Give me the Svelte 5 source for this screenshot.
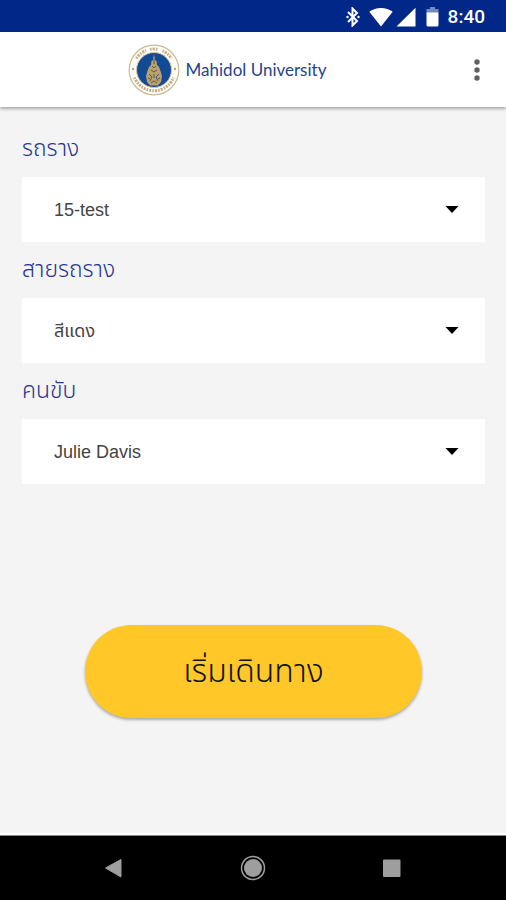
<script>
  let fields = $state([
    { id: "tram", label: "รถราง", value: "15-test", options: ["15-test"] },
    { id: "line", label: "สายรถราง", value: "สีแดง", options: ["สีแดง"] },
    {
      id: "driver",
      label: "คนขับ",
      value: "Julie Davis",
      options: ["Julie Davis"],
    },
  ]);
</script>

<div class="screen">
  <div class="status">
    <svg width="14" height="20" viewBox="0 0 14 20" aria-hidden="true">
      <path
        d="M2 5l9 9-4.500 4.500V1.500L11 6l-9 9"
        fill="none"
        stroke="#fff"
        stroke-width="2"
      />
      <circle cx="1.500" cy="10" r="1.200" fill="#fff" />
      <circle cx="12.500" cy="10" r="1.200" fill="#fff" />
    </svg>
    <svg class="wifi" width="24" height="20" viewBox="0 0 24 20" aria-hidden="true">
      <path d="M12 19.500L.3 4.800C3.500 2.300 7.500 1 12 1s8.500 1.300 11.700 3.800z" fill="#fff" />
    </svg>
    <svg class="signal" width="20" height="20" viewBox="0 0 20 20" aria-hidden="true">
      <path d="M19.500.8v18.700H.5z" fill="#fff" />
    </svg>
    <svg class="battery" width="13" height="20" viewBox="0 0 13 20" aria-hidden="true">
      <path d="M4 0h5v2h3.500v4H.5V2H4z" fill="#7288c2" />
      <path d="M.5 5.500h12V18q0 1.500-1.500 1.500H2Q.5 19.500.5 18z" fill="#fff" />
    </svg>
    <span class="time">8:40</span>
  </div>

  <header>
    <div class="brand">
      <svg width="52" height="52" viewBox="0 0 52 52" aria-hidden="true">
        <circle cx="26" cy="26" r="24.800" fill="#fffdf8" stroke="#cbb896" stroke-width="1.200" />
        <g fill="none" stroke="#c5ae86" stroke-width="3" stroke-dasharray="1.600 1 2.200 1">
          <path d="M8.500 14.500A21 21 0 0 1 18 6.500" />
          <path d="M22 5.400A21 21 0 0 1 30 5.400" />
          <path d="M34.500 6.800A21 21 0 0 1 43.500 14.500" />
          <path d="M6.500 33.500A21 21 0 0 0 45.500 33.500" />
        </g>
        <circle cx="5" cy="25" r="1.200" fill="#bfa16a" />
        <circle cx="47" cy="25" r="1.200" fill="#bfa16a" />
        <circle cx="26" cy="26" r="17.500" fill="#124a93" stroke="#d8c7a5" stroke-width="1" />
        <path
          d="M26 10l1 6 1.500 1 .5 4 2 2 1.500 4 1.500 5-1 6-3 3.500h-8L19 38l-1-6 1.500-5 1.500-4 2-2 .5-4 1.500-1z"
          fill="#bda16a"
        />
        <path
          d="M26 15v5M24 22l2 2 2-2M23 26l3 2 3-2M21 30l3 3-2 4M31 30l-3 3 2 4M26 30v4M23 39l3-2 3 2M20 34l2 1M32 34l-2 1"
          fill="none"
          stroke="#435d78"
          stroke-width="1"
        />
      </svg>
      <span class="name">Mahidol University</span>
    </div>
    <button class="more" aria-label="More options">
      <svg width="6" height="22" viewBox="0 0 6 22" aria-hidden="true">
        <circle cx="3" cy="3" r="2.700" fill="#616161" />
        <circle cx="3" cy="11" r="2.700" fill="#616161" />
        <circle cx="3" cy="19" r="2.700" fill="#616161" />
      </svg>
    </button>
  </header>

  <main>
    {#each fields as field (field.id)}
      <div class="field">
        <label for={field.id}>{field.label}</label>
        <div class="picker">
          <select id={field.id} bind:value={field.value}>
            {#each field.options as option}
              <option value={option}>{option}</option>
            {/each}
          </select>
          <svg class="arrow" width="14" height="7" viewBox="0 0 14 7" aria-hidden="true">
            <path d="M.5 0h13L7 7z" fill="#000" />
          </svg>
        </div>
      </div>
    {/each}

    <button class="start">เริ่มเดินทาง</button>
  </main>

  <nav>
    <button aria-label="Back">
      <svg width="28" height="28" viewBox="0 0 28 28" aria-hidden="true">
        <path d="M5.500 14L21 5.500v17.500z" fill="#9e9e9e" stroke="#9e9e9e" stroke-linejoin="round" />
      </svg>
    </button>
    <button aria-label="Home">
      <svg width="28" height="28" viewBox="0 0 28 28" aria-hidden="true">
        <circle cx="14" cy="14" r="11.500" fill="none" stroke="#9e9e9e" stroke-width="1.500" />
        <circle cx="14" cy="14" r="9" fill="#9e9e9e" />
      </svg>
    </button>
    <button aria-label="Recent apps">
      <svg width="28" height="28" viewBox="0 0 28 28" aria-hidden="true">
        <rect x="5" y="5.500" width="17.500" height="17.500" rx="1" fill="#9e9e9e" />
      </svg>
    </button>
  </nav>
</div>

<style>
  .screen {
    display: flex;
    flex-direction: column;
    min-height: 100vh;
    background: #f4f4f4;
    font-family: "Liberation Sans", "Noto Sans Thai", sans-serif;
  }

  button {
    border: 0;
    padding: 0;
    background: none;
    font: inherit;
    cursor: pointer;
  }

  svg {
    display: block;
    flex: none;
  }

  .status {
    display: flex;
    align-items: center;
    justify-content: flex-end;
    height: 32px;
    padding: 1px 21px 0;
    box-sizing: border-box;
    background: #012888;
    color: #fff;
  }

  .wifi {
    margin-left: 9px;
  }

  .signal {
    margin-left: 3px;
  }

  .battery {
    margin: 0 9px 0 10px;
  }

  .time {
    font-family: Roboto, sans-serif;
    font-size: 19px;
    font-weight: 500;
  }

  header {
    display: grid;
    grid-template-columns: 48px 1fr 48px;
    align-items: center;
    height: 75px;
    padding: 0 5px;
    background: #fff;
    box-shadow: 0 2px 3px rgba(0, 0, 0, 0.3);
  }

  .brand {
    display: flex;
    grid-column: 2;
    align-items: center;
    justify-content: center;
    gap: 6px;
    padding-right: 52px;
  }

  .name {
    color: #26438c;
    font-family: Lato, sans-serif;
    font-size: 17px;
    white-space: nowrap;
  }

  .more {
    display: flex;
    align-items: center;
    justify-content: center;
    height: 48px;
  }

  main {
    display: flex;
    flex: 1;
    flex-direction: column;
    padding: 14px 21px 24px 22px;
  }

  label {
    display: block;
    padding: 13px 0 15px;
    color: #26348f;
    font-size: 23px;
    font-weight: 300;
    line-height: 28px;
  }

  .picker {
    display: grid;
    align-items: center;
    background: #fff;
  }

  select {
    grid-area: 1 / 1;
    width: 100%;
    height: 65px;
    padding: 0 64px 0 32px;
    border: 0;
    appearance: none;
    background: none;
    color: #444;
    font: inherit;
    font-size: 18px;
  }

  .arrow {
    grid-area: 1 / 1;
    justify-self: end;
    margin-right: 26px;
    pointer-events: none;
  }

  .start {
    align-self: center;
    width: 73%;
    height: 93px;
    margin-top: 141px;
    border-radius: 47px;
    background: #ffc727;
    box-shadow: 0 2px 3px rgba(0, 0, 0, 0.3);
    color: #111;
    font-size: 32px;
    font-weight: 300;
  }

  nav {
    display: grid;
    grid-template-columns: repeat(3, 139px);
    align-items: center;
    justify-content: center;
    height: 64px;
    border-top: 1px solid #888;
    background: #000;
    box-shadow: 0 -2px 0 #fff;
  }

  nav button {
    display: flex;
    justify-content: center;
  }
</style>
